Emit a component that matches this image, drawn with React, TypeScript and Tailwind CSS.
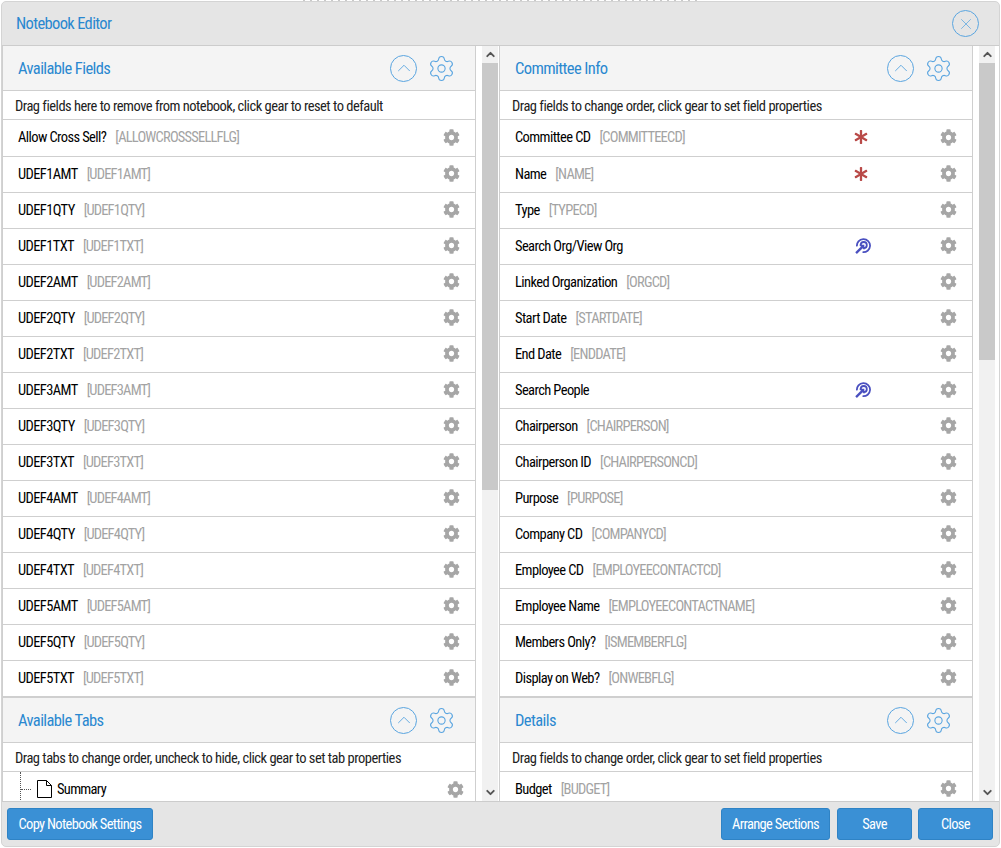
import { FaAsterisk, FaCog } from "react-icons/fa";
import { ChevronDown, ChevronUp, Settings, X } from "lucide-react";

const leftFields = [
  ["Allow Cross Sell?", "ALLOWCROSSSELLFLG"],
  ["UDEF1AMT", "UDEF1AMT"],
  ["UDEF1QTY", "UDEF1QTY"],
  ["UDEF1TXT", "UDEF1TXT"],
  ["UDEF2AMT", "UDEF2AMT"],
  ["UDEF2QTY", "UDEF2QTY"],
  ["UDEF2TXT", "UDEF2TXT"],
  ["UDEF3AMT", "UDEF3AMT"],
  ["UDEF3QTY", "UDEF3QTY"],
  ["UDEF3TXT", "UDEF3TXT"],
  ["UDEF4AMT", "UDEF4AMT"],
  ["UDEF4QTY", "UDEF4QTY"],
  ["UDEF4TXT", "UDEF4TXT"],
  ["UDEF5AMT", "UDEF5AMT"],
  ["UDEF5QTY", "UDEF5QTY"],
  ["UDEF5TXT", "UDEF5TXT"],
];

const rightFields = [
  ["Committee CD", "COMMITTEECD", "req"],
  ["Name", "NAME", "req"],
  ["Type", "TYPECD"],
  ["Search Org/View Org", "", "target"],
  ["Linked Organization", "ORGCD"],
  ["Start Date", "STARTDATE"],
  ["End Date", "ENDDATE"],
  ["Search People", "", "target"],
  ["Chairperson", "CHAIRPERSON"],
  ["Chairperson ID", "CHAIRPERSONCD"],
  ["Purpose", "PURPOSE"],
  ["Company CD", "COMPANYCD"],
  ["Employee CD", "EMPLOYEECONTACTCD"],
  ["Employee Name", "EMPLOYEECONTACTNAME"],
  ["Members Only?", "ISMEMBERFLG"],
  ["Display on Web?", "ONWEBFLG"],
];

function TargetIcon() {
  return (
    <svg viewBox="0 0 18 18" className="ml-[2px] h-[18px] w-[18px] text-[#4a50c0]" fill="none" stroke="currentColor" strokeWidth="2">
      <path d="M2.2 9.5A7.4 7.4 0 1 1 8.5 15.9" />
      <path d="M6.5 8A3.4 3.4 0 1 1 10 11.3" />
      <path d="M1.2 17 8 10.2" strokeWidth="2.6" />
      <path d="M4.5 7.5h6V13.5z" fill="currentColor" stroke="none" />
    </svg>
  );
}

function SectionHead({ title }: { title: string }) {
  return (
    <div className="flex h-[45px] items-center justify-between border-b border-[#cfcfcf] bg-[#f4f4f4] pl-[15px] pr-[19px]">
      <h2 className="pt-[2px] text-[16.5px] tracking-[-0.6px] text-[#2a88d0]">{title}</h2>
      <div className="flex items-center gap-[10px] text-[#5aa5e0]">
        <span className="flex h-[27px] w-[27px] items-center justify-center rounded-full border border-[#5aa5e0]">
          <ChevronUp size={22} strokeWidth={1} className="shrink-0" />
        </span>
        <Settings size={29} strokeWidth={0.9} />
      </div>
    </div>
  );
}

function Hint({ text }: { text: string }) {
  return (
    <div className="flex h-[29px] items-center border-b border-[#cfcfcf] bg-white pl-[12px] pt-[4px] text-[14.5px] leading-none tracking-[-0.5px] text-[#222]">
      {text}
    </div>
  );
}

function FieldRow({ label, code, mark, rowClass = "h-[36px] border-b" }: { label: string; code?: string; mark?: string; rowClass?: string }) {
  return (
    <div className={`${rowClass} flex items-center border-[#cfcfcf] bg-white px-[15px] text-[14.5px]`}>
      <span className="tracking-[-0.6px] text-black">{label}</span>
      {code && <span className="ml-[9px] tracking-[-0.8px] text-[#a3a3a3]">[{code}]</span>}
      {mark && (
        <span className="ml-auto mr-[69px] -mt-[2px] flex w-[18px] justify-center">
          {mark === "req" ? <FaAsterisk size={14} className="mr-[2px] text-[#b94a48]" /> : <TargetIcon />}
        </span>
      )}
      <FaCog size={17} className={mark ? "-mt-[2px] text-[#a6a6a6]" : "-mt-[2px] ml-auto text-[#a6a6a6]"} />
    </div>
  );
}

function Scrollbar({ thumb }: { thumb: string }) {
  return (
    <div className="flex w-[16px] flex-col bg-[#f1f1f1]">
      <div className="flex h-[17px] items-center justify-center text-[#555]">
        <ChevronUp size={13} strokeWidth={3.5} />
      </div>
      <div className={`${thumb} bg-[#c9c9c9]`} />
      <div className="mt-auto flex h-[17px] items-center justify-center text-[#555]">
        <ChevronDown size={13} strokeWidth={3.5} />
      </div>
    </div>
  );
}

function Btn({ children, width }: { children: string; width: string }) {
  return (
    <button className={`${width} h-[32px] rounded-[3px] border border-[#2f83c5] bg-[#3a90d5] pt-px text-[14.5px] tracking-[-0.68px] text-white`}>
      {children}
    </button>
  );
}

function rowClassFor(index: number, total: number) {
  if (index === 0) return "h-[37px] border-b";
  if (index === total - 1) return "h-[37px] border-b-2";
  return "h-[36px] border-b";
}

export default function App() {
  return (
    <div className="h-[848px] w-[1001px] overflow-hidden bg-white pl-px font-['Roboto','Liberation_Sans',sans-serif] [font-stretch:75%]">
      <div className="ml-[302px] h-px w-[394px] bg-[repeating-linear-gradient(90deg,#c9c9c9_0_2px,transparent_2px_7px)]" />
      <div className="flex h-[846px] w-[999px] flex-col overflow-hidden rounded-[5px] border border-[#d4d4d4] bg-[#e5e5e5]">
        <header className="flex h-[44px] shrink-0 items-center justify-between border-b border-[#cccccc] pl-[14px] pr-[20px]">
          <h1 className="pt-[2px] text-[16.5px] tracking-[-0.65px] text-[#2a88d0]">Notebook Editor</h1>
          <span className="flex h-[27px] w-[27px] items-center justify-center rounded-full border border-[#5aa5e0] text-[#5aa5e0]">
            <X size={18} strokeWidth={1} className="shrink-0" />
          </span>
        </header>

        <div className="flex h-[755px] shrink-0 overflow-hidden bg-white">
          <div className="flex w-[497px]">
            <div className="mr-[6px] w-[474px] overflow-hidden border-x border-[#cfcfcf]">
              <SectionHead title="Available Fields" />
              <Hint text="Drag fields here to remove from notebook, click gear to reset to default" />
              {leftFields.map(([label, code], i) => (
                <FieldRow key={label} label={label} code={code} rowClass={rowClassFor(i, leftFields.length)} />
              ))}
              <SectionHead title="Available Tabs" />
              <Hint text="Drag tabs to change order, uncheck to hide, click gear to set tab properties" />
              <div className="flex h-[34px] items-center bg-white pr-[11px] text-[14.5px]">
                <span className="ml-[17px] h-full border-l border-dotted border-[#555]" />
                <span className="w-[10px] border-t border-dotted border-[#555]" />
                <svg viewBox="0 0 15 18" className="ml-[6px] h-[18px] w-[15px]" fill="none" stroke="black" strokeWidth="1">
                  <path d="M.5.5h9l5 5v12H.5z" />
                  <path d="M9.5.5v5h5" />
                </svg>
                <span className="ml-[5px] pt-[2px] tracking-[-0.7px] text-black">Summary</span>
                <FaCog size={17} className="ml-auto text-[#a6a6a6]" />
              </div>
            </div>
            <Scrollbar thumb="h-[427px]" />
          </div>

          <div className="flex w-[497px]">
            <div className="mr-[6px] w-[474px] overflow-hidden border-x border-[#cfcfcf]">
              <SectionHead title="Committee Info" />
              <Hint text="Drag fields to change order, click gear to set field properties" />
              {rightFields.map(([label, code, mark], i) => (
                <FieldRow key={label} label={label} code={code} mark={mark} rowClass={rowClassFor(i, rightFields.length)} />
              ))}
              <SectionHead title="Details" />
              <Hint text="Drag fields to change order, click gear to set field properties" />
              <FieldRow label="Budget" code="BUDGET" />
            </div>
            <Scrollbar thumb="h-[297px]" />
          </div>
        </div>

        <footer className="flex flex-1 items-center justify-between border-t border-[#cccccc] pl-[5px] pr-[6px]">
          <Btn width="w-[146px]">Copy Notebook Settings</Btn>
          <div className="flex">
            <div className="mr-[7px]"><Btn width="w-[109px]">Arrange Sections</Btn></div>
            <div className="mr-[6px]"><Btn width="w-[75px]">Save</Btn></div>
            <Btn width="w-[75px]">Close</Btn>
          </div>
        </footer>
      </div>
    </div>
  );
}
